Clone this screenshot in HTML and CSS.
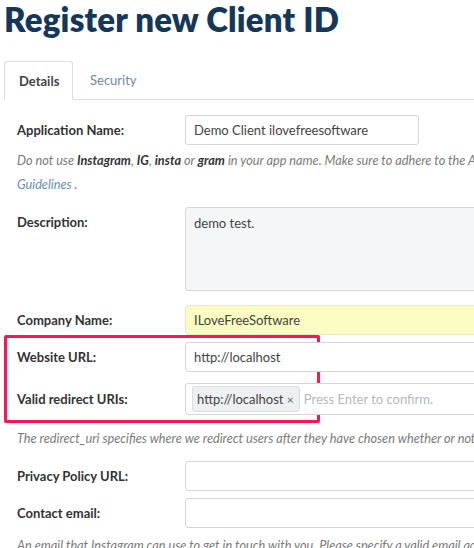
FILE: index.html
```html
<!DOCTYPE html>
<html>
<head>
<meta charset="utf-8">
<link rel="stylesheet" href="styles.css">
</head>
<body>
<div class="page">
  <h1 class="title">Register new Client ID</h1>
  <div class="tabs">
    <div class="tab active">Details</div>
    <div class="tab">Security</div>
    <div class="tab-rest"></div>
  </div>
  <div class="form">
    <div class="row r-app">
      <label class="label">Application Name:</label>
      <div class="input short">Demo Client ilovefreesoftware</div>
    </div>
    <p class="help h-app">Do not use <b>Instagram</b>, <b>IG</b>, <b>insta</b> or <b>gram</b> in your app name. Make sure to adhere to the API Terms of Use and Brand<br><a class="link">Guidelines</a> .</p>
    <div class="row r-desc">
      <label class="label">Description:</label>
      <div class="input textarea">demo test.</div>
    </div>
    <div class="row r-company">
      <label class="label">Company Name:</label>
      <div class="input yellow">ILoveFreeSoftware</div>
    </div>
    <div class="highlight">
      <div class="row r-web">
        <label class="label">Website URL:</label>
        <div class="input">http://localhost</div>
      </div>
      <div class="row r-redirect">
        <label class="label">Valid redirect URIs:</label>
        <div class="input tags"><span class="tag">http://localhost <span class="x">×</span></span><span class="placeholder">Press Enter to confirm.</span></div>
      </div>
    </div>
    <p class="help h-redirect">The redirect_uri specifies where we redirect users after they have chosen whether or not to authenticate your application.</p>
    <div class="row r-privacy">
      <label class="label">Privacy Policy URL:</label>
      <div class="input"></div>
    </div>
    <div class="row r-contact">
      <label class="label">Contact email:</label>
      <div class="input"></div>
    </div>
    <p class="help h-contact">An email that Instagram can use to get in touch with you. Please specify a valid email address.</p>
  </div>
</div>
</body>
</html>
```
FILE: styles.css
```css
* { box-sizing: border-box; }
html, body { margin: 0; padding: 0; background: #fff; overflow: hidden; }
body { width: 474px; height: 548px; font-family: "Lato", "Open Sans", sans-serif; color: #333; }
.page { padding: 0 0 0 4px; white-space: nowrap; }
.title {
  margin: 0; padding-top: 0;
  font-size: 33px; font-weight: 800; color: #15375c;
  line-height: 38px; letter-spacing: 0.2px;
}
.tabs { display: flex; margin-top: 23px; height: 39px; }
.tab {
  height: 39px; padding: 0 17px 0 17px; line-height: 38px;
  font-size: 13px; color: #6d8aa8;
}
.tab.active {
  width: 69px; padding: 0 0 0 14px; color: #444; font-weight: 700;
  border: 1px solid #dedede; border-bottom: none; border-radius: 3px 3px 0 0;
}
.tab-rest { flex: 1; border-bottom: 1px solid #dedede; }
.tab:not(.active) { border-bottom: 1px solid #dedede; }
.form { padding-left: 13px; }
.row { display: flex; align-items: center; }
.label { width: 168px; flex: none; font-size: 13px; font-weight: 700; color: #333; }
.input {
  flex: none; width: 330px; height: 30px;
  border: 1px solid #d5d5d5; border-radius: 3px;
  padding: 0 8px; font-size: 13px; line-height: 28px; color: #444; background: #fff;
}
.input.short { width: 234px; }
.r-app { margin-top: 15px; }
.help {
  margin: 0; font-size: 12.7px; font-style: italic; color: #7a7a7a; line-height: 24px;
}
.help b { color: #333; }
.link { color: #6b8db3; }
.h-app { margin-top: 3px; }
.r-desc { margin-top: 11px; align-items: flex-start; }
.r-desc .label { padding-top: 7px; }
.input.textarea { height: 84px; background: #f5f6f8; padding-top: 1px; }
.r-company { margin-top: 14px; }
.input.yellow { background: #fafcc2; border-color: #e6e8c8; }
.highlight {
  width: 316px; height: 88px; margin-left: -13px; padding-left: 10px;
  border: 3px solid #ff1458; border-radius: 2px; margin-top: 0;
}
.highlight .row { margin-right: -400px; }
.r-web { margin-top: 4px; }
.r-redirect { margin-top: 11px; }
.input.tags { height: 32px; display: flex; align-items: center; padding: 0 6px; }
.tag {
  display: inline-block; height: 26px; line-height: 24px; padding: 0 5px 0 4px;
  background: #eeeff1; border: 1px solid #dcdde0; border-radius: 3px; color: #444; font-size: 13px;
}
.tag .x { font-size: 12px; color: #666; margin-left: 0; }
.placeholder { margin-left: 4px; color: #b6b8bb; font-size: 13px; }
.h-redirect { margin-top: 3px; }
.r-privacy { margin-top: 11px; }
.r-contact { margin-top: 7px; }
.h-contact { margin-top: 5px; }
```
